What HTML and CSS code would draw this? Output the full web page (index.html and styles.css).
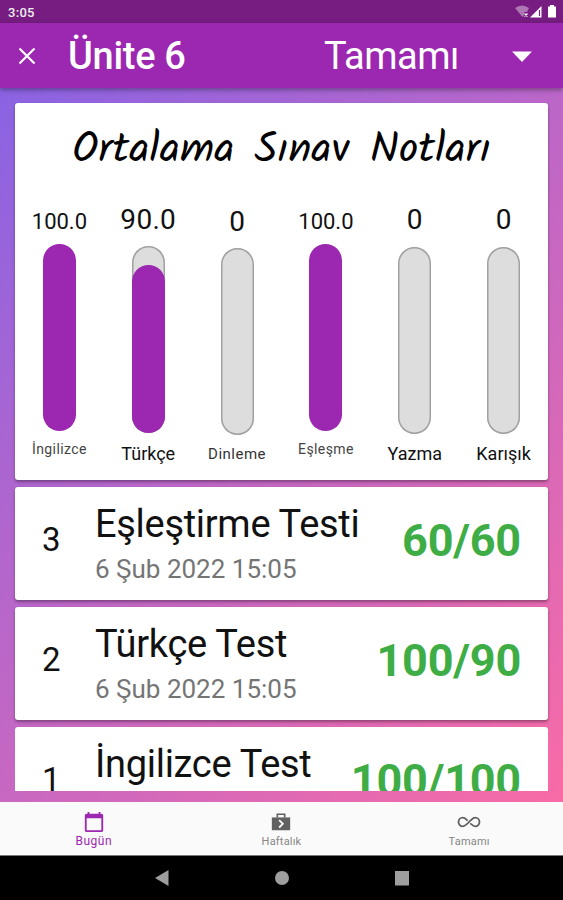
FILE: index.html
```
<!DOCTYPE html>
<html lang="tr">

<head>
    <meta charset="utf-8">
    <title>Ünite 6</title>
    <link rel="stylesheet" href="styles.css">
</head>

<body>
    <div class="status-bar">
        <span class="clock">3:05</span>
        <svg class="status-icons" width="44" height="16" viewBox="0 0 44 16">
            <path d="M1 4Q8 -1 15 4L13 8H10V11L8.500 13Z" fill="#fff" opacity=".4" />
            <path d="M10.500 9.500l3 3m0-3l-3 3" stroke="#fff" stroke-width="1.200" />
            <path d="M16 13.500L27.500 2V13.500Z" fill="#fff" />
            <path d="M25.500 6v6" stroke="#7b1e87" stroke-width="1.200" />
            <path d="M34 2.500h2V1h4v1.500h2v11h-8z" fill="#fff" />
        </svg>
    </div>

    <div class="app-bar">
        <svg class="close" width="18" height="18" viewBox="0 0 18 18">
            <path d="M1.500 1.500l15 15m0-15l-15 15" stroke="#fff" stroke-width="2.200" />
        </svg>
        <div class="app-title">Ünite 6</div>
        <div class="filter">Tamamı</div>
        <svg class="arrow" width="20" height="12" viewBox="0 0 20 12">
            <path d="M0 0.500h20l-10 10.500z" fill="#fff" />
        </svg>
    </div>

    <div class="content">
        <div class="card chart">
            <div class="chart-title"><span>Ortalama</span><span>Sınav</span><span>Notları</span></div>
            <div class="bars">
                <div class="column small">
                    <div class="value">100.0</div>
                    <div class="bar"><div class="fill" style="height: 100%"></div></div>
                    <div class="label">İngilizce</div>
                </div>
                <div class="column turkce">
                    <div class="value">90.0</div>
                    <div class="bar"><div class="fill" style="height: 90%"></div></div>
                    <div class="label">Türkçe</div>
                </div>
                <div class="column dinleme">
                    <div class="value">0</div>
                    <div class="bar"></div>
                    <div class="label">Dinleme</div>
                </div>
                <div class="column small">
                    <div class="value">100.0</div>
                    <div class="bar"><div class="fill" style="height: 100%"></div></div>
                    <div class="label">Eşleşme</div>
                </div>
                <div class="column">
                    <div class="value">0</div>
                    <div class="bar"></div>
                    <div class="label">Yazma</div>
                </div>
                <div class="column">
                    <div class="value">0</div>
                    <div class="bar"></div>
                    <div class="label">Karışık</div>
                </div>
            </div>
        </div>

        <div class="card test">
            <div class="number">3</div>
            <div class="info">
                <div class="name">Eşleştirme Testi</div>
                <div class="date">6 Şub 2022 15:05</div>
            </div>
            <div class="score">60/60</div>
        </div>
        <div class="card test">
            <div class="number">2</div>
            <div class="info">
                <div class="name">Türkçe Test</div>
                <div class="date">6 Şub 2022 15:05</div>
            </div>
            <div class="score">100/90</div>
        </div>
        <div class="last-row">
            <div class="card test">
                <div class="number">1</div>
                <div class="info">
                    <div class="name">İngilizce Test</div>
                </div>
                <div class="score">100/100</div>
            </div>
        </div>
    </div>

    <div class="tabs">
        <div class="tab active">
            <svg width="22" height="22" viewBox="0 0 24 24" fill="currentColor">
                <path d="M20 3h-1V1h-2v2H7V1H5v2H4c-1.100 0-2 .9-2 2v16c0 1.100.9 2 2 2h16c1.100 0 2-.9 2-2V5c0-1.100-.9-2-2-2zm0 18H4V8h16v13z" />
            </svg>
            <span>Bugün</span>
        </div>
        <div class="tab">
            <svg width="22" height="22" viewBox="0 0 24 24">
                <path d="M2 7h20v14H2z" fill="#616161" />
                <path d="M8 7V3.500h8V7" fill="none" stroke="#616161" stroke-width="1.800" />
                <path d="M10 10l4 4-4 4" fill="none" stroke="#fafafa" stroke-width="2" />
            </svg>
            <span>Haftalık</span>
        </div>
        <div class="tab">
            <svg width="24" height="22" viewBox="0 0 24 22">
                <path d="M10.700 12.300C9 13.800 8 15.300 5.800 15.300a4.300 4.300 0 0 1 0-8.600C8 6.700 9 8.200 10.700 9.700M10.700 12.300L13.300 9.700C15 8.200 16 6.700 18.200 6.700a4.300 4.300 0 0 1 0 8.600C16 15.300 15 13.800 13.300 12.300" fill="none" stroke="#616161" stroke-width="1.800" />
            </svg>
            <span>Tamamı</span>
        </div>
    </div>

    <div class="system-nav">
        <svg width="16" height="18" viewBox="0 0 16 18"><path d="M1 9L14.500 1v16z" fill="#9e9e9e" /></svg>
        <svg width="16" height="16" viewBox="0 0 16 16"><circle cx="8" cy="8" r="7" fill="#9e9e9e" /></svg>
        <svg width="16" height="16" viewBox="0 0 16 16"><path d="M1 1h14v14.500H1z" fill="#9e9e9e" /></svg>
    </div>
</body>

</html>
```
FILE: styles.css
```
body {
    margin: 0;
    width: 563px;
    height: 900px;
    overflow: hidden;
    font-family: Roboto, sans-serif;
    color: #111;
    display: flex;
    flex-direction: column;
}

.status-bar {
    height: 23px;
    flex: none;
    background-color: #771d82;
    display: flex;
    justify-content: space-between;
    align-items: center;
    padding: 0 5px 0 8px;
    color: #eee;
}

.clock {
    font-size: 13px;
    font-weight: 500;
    padding-top: 1px;
    letter-spacing: 0.3px;
}

.status-icons {
    margin-top: 1px;
}

.app-bar {
    height: 65px;
    flex: none;
    background-color: #9c27b0;
    color: #fff;
    display: flex;
    align-items: center;
    box-shadow: 0 2px 5px rgba(0, 0, 0, 0.35);
    z-index: 1;
}

.close {
    margin-left: 18px;
    width: 18px;
}

.app-title {
    margin-left: 32px;
    width: 256px;
    font-size: 38px;
    font-weight: 500;
    letter-spacing: -0.3px;
}

.filter {
    width: 188px;
    font-size: 38px;
    letter-spacing: -0.5px;
}

.arrow {
    margin-top: 2px;
}

.content {
    height: 714px;
    flex: none;
    box-sizing: border-box;
    padding: 15px 15px 0;
    background: linear-gradient(135deg, #8a63e3, #f86ba6);
}

.card {
    background-color: #fff;
    border-radius: 3px;
    box-shadow: 0 2px 3px rgba(0, 0, 0, 0.35);
}

.chart {
    height: 377px;
    margin-bottom: 7px;
}

.chart-title {
    height: 98px;
    box-sizing: border-box;
    padding-top: 22px;
    font-family: Kalam, "Open Sans", sans-serif;
    font-size: 43px;
    line-height: 52px;
    color: #000;
    display: flex;
    justify-content: center;
    gap: 20px;
}

.bars {
    display: grid;
    grid-template-columns: repeat(6, 1fr);
}

.column {
    display: flex;
    flex-direction: column;
    align-items: center;
}

.value {
    font-size: 28px;
    line-height: 38px;
    height: 46px;
}

.bar {
    width: 33px;
    height: 187px;
    border-radius: 17px;
    background-color: #ddd;
    box-shadow: inset 0 0 0 1.5px #a0a0a0;
    display: flex;
    align-items: flex-end;
}

.fill {
    width: 33px;
    border-radius: 17px;
    background-color: #9c27b0;
}

.label {
    font-size: 18px;
    line-height: 22px;
    margin-top: 9px;
    white-space: nowrap;
}

.small .value {
    font-size: 22px;
    line-height: 42px;
    height: 43px;
}

.small .bar {
    box-shadow: none;
    background-color: transparent;
}

.small .label {
    font-size: 14px;
    letter-spacing: 0.4px;
    margin-top: 7px;
    color: #444;
}

.turkce .value {
    height: 45px;
    letter-spacing: 0.3px;
}

.turkce .label {
    margin-top: 10px;
}

.dinleme .value {
    height: 47px;
    line-height: 41px;
}

.dinleme .label {
    font-size: 15px;
    letter-spacing: 0.5px;
    margin-top: 8px;
    color: #333;
}

.test {
    height: 113px;
    margin-bottom: 7px;
    display: flex;
}

.number {
    width: 80px;
    padding-left: 27px;
    box-sizing: border-box;
    font-size: 33px;
    line-height: 105px;
}

.info {
    flex: 1;
}

.name {
    font-size: 38px;
    line-height: 44px;
    padding-top: 15px;
    letter-spacing: -0.3px;
    white-space: nowrap;
}

.date {
    font-size: 26px;
    line-height: 30px;
    margin-top: 8px;
    color: #757575;
}

.score {
    padding-right: 27px;
    font-size: 45px;
    line-height: 108px;
    font-weight: 700;
    letter-spacing: -0.2px;
    color: #3ead46;
}

.last-row {
    height: 64px;
    overflow: hidden;
}

.tabs {
    height: 53px;
    flex: none;
    background-color: #fafafa;
    border-bottom: 1px solid #777;
    display: grid;
    grid-template-columns: repeat(3, 1fr);
}

.tab {
    display: flex;
    flex-direction: column;
    align-items: center;
    padding-top: 9px;
    font-size: 11px;
    line-height: 17px;
    letter-spacing: 0.2px;
    color: #858585;
}

.active {
    color: #9c27b0;
    font-size: 12px;
    letter-spacing: 0.5px;
    line-height: 16px;
}

.system-nav {
    flex: 1;
    background-color: #000;
    display: flex;
    justify-content: center;
    align-items: center;
    gap: 104px;
}
```
